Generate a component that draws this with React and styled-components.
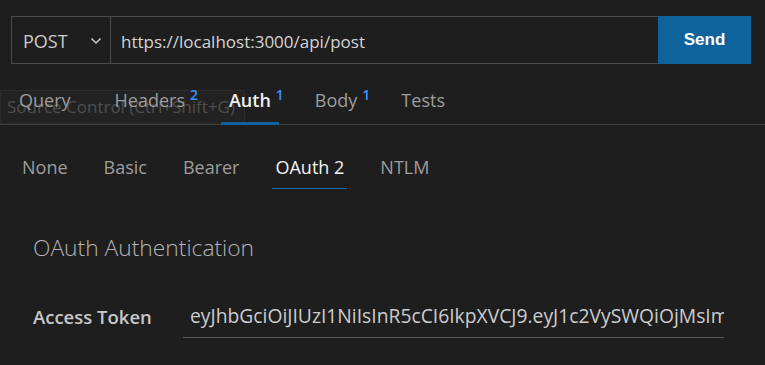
import React from 'react';
import styled, { createGlobalStyle } from 'styled-components';

const GlobalStyle = createGlobalStyle`
  html, body {
    margin: 0;
    padding: 0;
    background: #1e1e1e;
  }
  body {
    font-family: "Open Sans", "Noto Sans", sans-serif;
    color: #cccccc;
    overflow: hidden;
  }
`;

const Page = styled.div`
  width: 765px;
  height: 365px;
  background: #1e1e1e;
  padding: 16px 14px 0 11px;
  box-sizing: border-box;
`;

const RequestBar = styled.div`
  display: flex;
  height: 48px;
  width: 740px;
`;

const MethodSelect = styled.div`
  display: flex;
  align-items: center;
  justify-content: space-between;
  width: 100px;
  box-sizing: border-box;
  padding: 2px 8px 0 11px;
  border: 1px solid #4b4b4b;
  font-size: 18px;
  color: #cccccc;
`;

const UrlInput = styled.div`
  flex: 1;
  display: flex;
  align-items: center;
  padding: 2px 0 0 10px;
  border-top: 1px solid #4b4b4b;
  border-bottom: 1px solid #4b4b4b;
  font-size: 17px;
  color: #d4d4d4;
`;

const SendButton = styled.button`
  width: 93px;
  border: none;
  background: #0e639c;
  color: #ffffff;
  font-family: "Liberation Sans", Arial, sans-serif;
  font-size: 17px;
  font-weight: 600;
  cursor: pointer;
`;

const TabBar = styled.div`
  position: relative;
  display: flex;
  gap: 28px;
  margin: 16px -14px 0 -11px;
  padding-left: 11px;
  height: 44px;
  border-bottom: 1px solid #3c3c3c;
`;

const Tooltip = styled.div`
  position: absolute;
  left: 0;
  top: 10px;
  width: 245px;
  height: 34px;
  box-sizing: border-box;
  padding: 0 0 2px 6px;
  display: flex;
  align-items: center;
  background: #222222;
  border: 1px solid #2c2c2c;
  color: #4e4e4e;
  font-size: 17px;
  z-index: 0;
  white-space: nowrap;
`;

const Tab = styled.div`
  position: relative;
  z-index: 1;
  display: flex;
  align-items: center;
  padding: 0 8px 5px;
  font-size: 18px;
  font-weight: ${(p) => (p.$active ? 600 : 400)};
  color: ${(p) => (p.$active ? '#f0f0f0' : '#9d9d9d')};
  box-shadow: ${(p) => (p.$active ? 'inset 0 -3px 0 #0e639c' : 'none')};
  margin-bottom: -1px;
`;

const Badge = styled.span`
  position: absolute;
  left: 100%;
  top: 8px;
  margin-left: -3px;
  font-size: 14px;
  font-weight: 600;
  line-height: 1;
  color: #3794ff;
`;

const AuthTabs = styled.div`
  display: flex;
  gap: 30px;
  padding: 30px 0 0 8px;
`;

const AuthTab = styled.div`
  padding: 0 3px 8px;
  font-size: 18px;
  line-height: 25px;
  color: ${(p) => (p.$active ? '#f4f4f4' : '#9d9d9d')};
  border-bottom: 1px solid ${(p) => (p.$active ? '#1a6aa8' : 'transparent')};
`;

const Section = styled.div`
  padding: 44px 0 0 22px;
`;

const Heading = styled.h2`
  margin: 0;
  font-size: 22.8px;
  font-weight: 300;
  color: #b4b4b4;
  line-height: 30px;
`;

const FieldRow = styled.div`
  display: flex;
  align-items: center;
  margin-top: 32px;
`;

const Label = styled.label`
  width: 150px;
  font-size: 18.5px;
  font-weight: 600;
  color: #c8c8c8;
`;

const TokenInput = styled.div`
  width: 541px;
  box-sizing: border-box;
  padding: 8px 0 9px 7px;
  line-height: 25px;
  border-bottom: 1px solid #5a5a5a;
  font-size: 19.3px;
  color: #cccccc;
  white-space: nowrap;
  overflow: hidden;
`;

const Chevron = () => (
  <svg width="12" height="8" viewBox="0 0 12 8" fill="none">
    <path d="M1.5 1.5 L6 6 L10.5 1.5" stroke="#cccccc" strokeWidth="1.5" />
  </svg>
);

const tabs = [
  { name: 'Query' },
  { name: 'Headers', count: 2 },
  { name: 'Auth', count: 1, active: true },
  { name: 'Body', count: 1 },
  { name: 'Tests' },
];

const authTypes = ['None', 'Basic', 'Bearer', 'OAuth 2', 'NTLM'];

const App = () => {
  return (
    <Page>
      <GlobalStyle />
      <RequestBar>
        <MethodSelect>
          POST
          <Chevron />
        </MethodSelect>
        <UrlInput>https://localhost:3000/api/post</UrlInput>
        <SendButton>Send</SendButton>
      </RequestBar>

      <TabBar>
        <Tooltip>Source Control (Ctrl+Shift+G)</Tooltip>
        {tabs.map((t) => (
          <Tab key={t.name} $active={t.active}>
            {t.name}
            {t.count && <Badge>{t.count}</Badge>}
          </Tab>
        ))}
      </TabBar>

      <AuthTabs>
        {authTypes.map((a) => (
          <AuthTab key={a} $active={a === 'OAuth 2'}>
            {a}
          </AuthTab>
        ))}
      </AuthTabs>

      <Section>
        <Heading>OAuth Authentication</Heading>
        <FieldRow>
          <Label>Access Token</Label>
          <TokenInput>eyJhbGciOiJIUzI1NiIsInR5cCI6IkpXVCJ9.eyJ1c2VySWQiOjMsImlhdCI6MTY</TokenInput>
        </FieldRow>
      </Section>
    </Page>
  );
};

export default App;
